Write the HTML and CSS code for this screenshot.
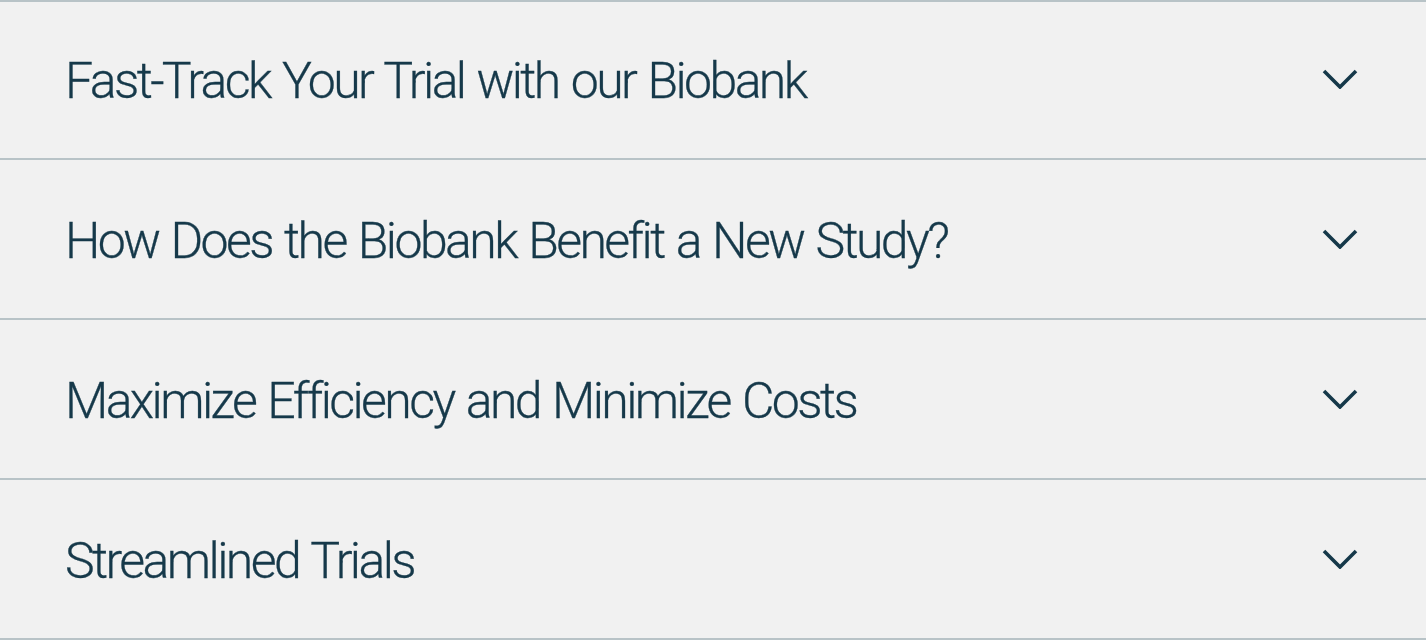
FILE: index.html
```html
<!DOCTYPE html>
<html lang="en">
<head>
<meta charset="utf-8">
<title>Biobank FAQ</title>
<link rel="stylesheet" href="styles.css">
</head>
<body>
<div class="accordion">
  <div class="item">
    <span class="title">Fast-Track Your Trial with our Biobank</span>
    <svg class="chev" width="36" height="20" viewBox="0 0 36 20"><path d="M2 2 L18 18 L34 2" fill="none" stroke="#16394a" stroke-width="3.6"/></svg>
  </div>
  <div class="item">
    <span class="title">How Does the Biobank Benefit a New Study?</span>
    <svg class="chev" width="36" height="20" viewBox="0 0 36 20"><path d="M2 2 L18 18 L34 2" fill="none" stroke="#16394a" stroke-width="3.6"/></svg>
  </div>
  <div class="item">
    <span class="title">Maximize Efficiency and Minimize Costs</span>
    <svg class="chev" width="36" height="20" viewBox="0 0 36 20"><path d="M2 2 L18 18 L34 2" fill="none" stroke="#16394a" stroke-width="3.6"/></svg>
  </div>
  <div class="item">
    <span class="title">Streamlined Trials</span>
    <svg class="chev" width="36" height="20" viewBox="0 0 36 20"><path d="M2 2 L18 18 L34 2" fill="none" stroke="#16394a" stroke-width="3.6"/></svg>
  </div>
</div>
</body>
</html>
```

FILE: styles.css
```css
html, body {
  margin: 0;
  padding: 0;
  background: #f1f1f1;
}
body {
  font-family: Roboto, "Liberation Sans", Arial, sans-serif;
  color: #16394a;
  overflow: hidden;
}
.accordion {
  display: flex;
  flex-direction: column;
}
.item {
  height: 158px;
  border-bottom: 2px solid #b8c3c7;
  display: flex;
  align-items: center;
  justify-content: space-between;
  padding: 0 68px 0 65px;
}
.item:first-child {
  box-shadow: inset 0 2px 0 #b8c3c7;
}
.title {
  font-size: 50px;
  font-weight: 300;
  line-height: 50px;
  letter-spacing: -2.6px;
  word-spacing: 2.5px;
  padding-top: 3px;
  white-space: nowrap;
  -webkit-text-stroke: 0.3px #16394a;
}
.chev {
  display: block;
  flex-shrink: 0;
}
```
